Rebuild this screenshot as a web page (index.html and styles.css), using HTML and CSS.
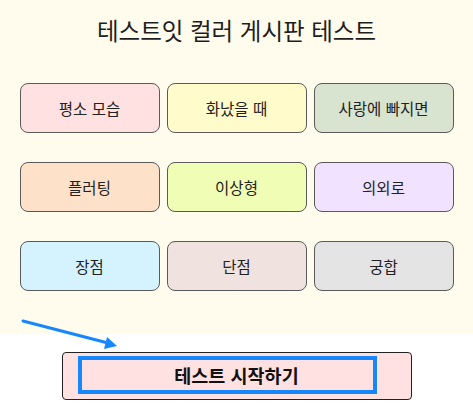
FILE: index.html
```html
<!DOCTYPE html>
<html lang="ko">
<head>
<meta charset="utf-8">
<title>테스트잇 컬러 게시판 테스트</title>
<link rel="stylesheet" href="styles.css">
</head>
<body>
  <section class="board">
    <h1 class="title">테스트잇 컬러 게시판 테스트</h1>
    <div class="grid">
      <div class="card c-pink">평소 모습</div>
      <div class="card c-yellow">화났을 때</div>
      <div class="card c-sage">사랑에 빠지면</div>
      <div class="card c-peach">플러팅</div>
      <div class="card c-lime">이상형</div>
      <div class="card c-lavender">의외로</div>
      <div class="card c-sky">장점</div>
      <div class="card c-rose">단점</div>
      <div class="card c-gray">궁합</div>
    </div>
  </section>

  <svg class="pointer" width="104" height="32" viewBox="0 0 104 32" aria-hidden="true">
    <line x1="3" y1="3" x2="88" y2="25" stroke="#1787ff" stroke-width="3" stroke-linecap="round"/>
    <polygon points="97,28 84,31 87,19" fill="#1787ff"/>
  </svg>

  <div class="start">
    <button class="start-btn" type="button"><span class="start-label">테스트 시작하기</span></button>
  </div>
</body>
</html>
```

FILE: styles.css
```css
html, body {
  margin: 0;
  padding: 0;
  background: #ffffff;
}

body {
  position: relative;
  width: 473px;
  font-family: "Noto Sans CJK KR", "Noto Sans", sans-serif;
  color: #222;
}

.board {
  background: #fffcee;
  height: 334px;
  box-sizing: border-box;
  padding-top: 14px;
}

.title {
  margin: 0;
  font-size: 23.5px;
  font-weight: 400;
  line-height: 32px;
  text-align: center;
  color: #1e1e1e;
}

.grid {
  margin-top: 37px;
  display: grid;
  grid-template-columns: repeat(3, 140px);
  grid-auto-rows: 50px;
  column-gap: 7px;
  row-gap: 29px;
  justify-content: center;
}

.card {
  box-sizing: border-box;
  border: 1px solid #5a5a5a;
  border-radius: 8px;
  display: flex;
  align-items: center;
  justify-content: center;
  font-size: 15.5px;
  color: #222;
}

.c-pink { background: #ffe1e1; }
.c-yellow { background: #fffbcb; }
.c-sage { background: #d8e3d0; }
.c-peach { background: #fde1c9; }
.c-lime { background: #f0fdb5; }
.c-lavender { background: #f1e3ff; }
.c-sky { background: #d4f3ff; }
.c-rose { background: #f0e2de; }
.c-gray { background: #e4e4e4; }

.pointer {
  position: absolute;
  left: 20px;
  top: 318px;
}

.start {
  display: flex;
  justify-content: center;
  padding-top: 18px;
}

.start-btn {
  box-sizing: border-box;
  width: 350px;
  height: 48px;
  margin: 0;
  padding: 3px 34px 5px 15px;
  background: #ffe1e1;
  border: 1px solid #222;
  border-radius: 4px;
  font: inherit;
  display: flex;
}

.start-label {
  flex: 1;
  box-sizing: border-box;
  border: 4px solid #1787ff;
  display: flex;
  align-items: center;
  justify-content: center;
  padding-left: 19px;
  font-size: 18.5px;
  font-weight: 700;
  color: #111;
}
```
